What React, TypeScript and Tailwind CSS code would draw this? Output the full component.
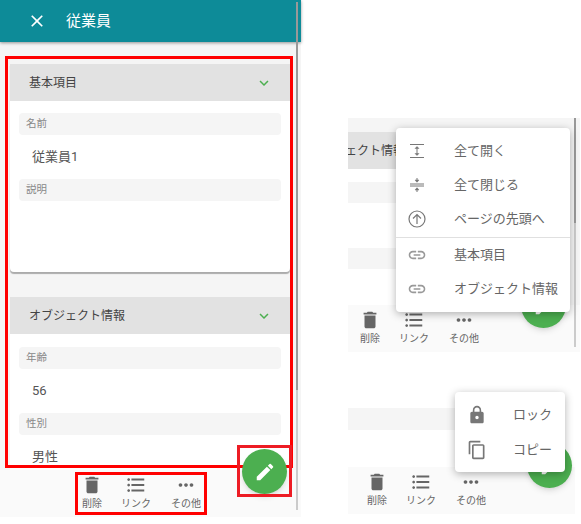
import { MdClose, MdContentCopy, MdDelete, MdEdit, MdExpandMore, MdFormatListBulleted, MdLink, MdLock, MdMoreHoriz } from "react-icons/md";

const font = "font-['Roboto','Noto_Sans_CJK_JP',sans-serif]";

const Toolbar = ({ left }: { left: string }) => (
  <div className={`flex h-[47px] shrink-0 bg-[#fafafa] text-[#666] ${left}`}>
    <div className="flex w-10 flex-col items-center pt-1">
      <MdDelete size={22} className="text-[#666]" />
      <span className="mt-[1px] text-[10px] leading-[14px]">削除</span>
    </div>
    <div className="flex w-12 flex-col items-center pt-1">
      <MdFormatListBulleted size={22} className="text-[#666]" />
      <span className="mt-[1px] text-[10px] leading-[14px] whitespace-nowrap">リンク</span>
    </div>
    <div className="flex w-[52px] flex-col items-center pt-1">
      <MdMoreHoriz size={22} className="text-[#666]" />
      <span className="mt-[1px] text-[10px] leading-[14px] whitespace-nowrap">その他</span>
    </div>
  </div>
);

const Label = ({ text }: { text: string }) => (
  <div className="flex h-[22px] items-center rounded-sm bg-[#f5f5f5] px-[7px] text-[10.5px] text-[#888]">{text}</div>
);

const Value = ({ text }: { text: string }) => (
  <div className="flex h-[44px] items-center pb-[1px] pl-[13px] text-[13px] text-[#555]">{text}</div>
);

const SectionHead = ({ title }: { title: string }) => (
  <div className="flex h-[37px] items-center justify-between bg-[#e2e2e2] pl-[19px] pr-[17px] text-[12px] text-[#444]">
    <span>{title}</span>
    <MdExpandMore size={18} className="text-[#4caf50]" />
  </div>
);

const Fab = ({ className }: { className: string }) => (
  <div className={`absolute flex size-[45px] items-center justify-center rounded-full bg-[#4caf50] text-white shadow-md ${className}`}>
    <MdEdit size={22} />
  </div>
);

const MenuItem = ({ icon, text, row }: { icon: React.ReactNode; text: string; row: string }) => (
  <div className={`flex items-center text-[13px] text-[#666] ${row}`}>
    <span className="flex w-[20px] justify-center text-[#777]">{icon}</span>
    <span className="whitespace-nowrap">{text}</span>
  </div>
);

const ExpandAll = () => (
  <svg width="18" height="18" viewBox="0 0 18 18" fill="none" stroke="currentColor">
    <path d="M2 2.5h14M2 15.5h14" strokeWidth="1.2" />
    <path d="M9 5v8" strokeWidth="1" />
    <path d="M7 6.5 9 4.5l2 2zM7 11.5l2 2 2-2z" fill="currentColor" strokeWidth="0.5" />
  </svg>
);

const CollapseAll = () => (
  <svg width="18" height="18" viewBox="0 0 18 18" fill="none" stroke="currentColor">
    <path d="M2 8h14M2 10h14" strokeWidth="1" />
    <path d="M9 2v4M9 12v4" strokeWidth="1" />
    <path d="M7 4 9 6.3 11 4zM7 14l2-2.3 2 2.3z" fill="currentColor" strokeWidth="0.5" />
  </svg>
);

const ToTop = () => (
  <svg width="20" height="20" viewBox="0 0 20 20" fill="none" stroke="currentColor" strokeWidth="1.2">
    <circle cx="10" cy="10" r="8" />
    <path d="M10 15V5.5M6 9.5l4-4 4 4" />
  </svg>
);

export default function App() {
  return (
    <div className={`flex h-[524px] w-[581px] overflow-hidden bg-white ${font}`}>
      {/* left screen */}
      <div className="relative flex h-[517px] w-[301px] shrink-0 flex-col bg-[#f5f5f5]">
        <div className="flex h-[42px] shrink-0 items-center bg-[#0d8b98] pl-[27px] text-white shadow-[0_1px_3px_rgba(0,0,0,0.4)]">
          <MdClose size={20} />
          <span className="ml-[19px] text-[15px]">従業員</span>
        </div>
        <div className="flex-1 overflow-hidden px-[10px] pt-[22px]">
          <div className="h-[208px] w-[280px] rounded-b-sm bg-white shadow-[0_2px_1px_rgba(0,0,0,0.3)]">
            <SectionHead title="基本項目" />
            <div className="px-[9px] pt-3">
              <Label text="名前" />
              <Value text="従業員1" />
              <Label text="説明" />
            </div>
          </div>
          <div className="mt-[25px] w-[280px] bg-white">
            <SectionHead title="オブジェクト情報" />
            <div className="px-[9px] pt-[13px]">
              <Label text="年齢" />
              <Value text="56" />
              <Label text="性別" />
              <Value text="男性" />
            </div>
          </div>
        </div>
        <Toolbar left="pl-[72px]" />
        <div className="absolute left-[296px] top-[2px] flex h-[508px] w-[2px] flex-col bg-[#cbcbcb]">
          <div className="h-[388px] bg-[#999]" />
        </div>
        {/* annotation boxes */}
        <div className="absolute left-[5px] top-[56px] h-[412px] w-[288px] border-[3px] border-[#ff0000]" />
        <div className="absolute left-[75px] top-[472px] h-[43px] w-[132px] border-[3px] border-[#ff0000]" />
        <Fab className="left-[242px] top-[449px]" />
        <div className="absolute left-[237px] top-[445px] h-[52px] w-[55px] border-[3px] border-[#ed1c24]" />
      </div>

      <div className="ml-[47px] flex flex-1 flex-col">
        {/* top crop: page menu */}
        <div className="relative mt-[118px] flex h-[234px] w-[232px] flex-col overflow-hidden bg-[#f5f5f5]">
          <div className="flex-1">
            <div className="h-[14px]" />
            <div className="flex h-[37px] w-[220px] items-center overflow-hidden whitespace-nowrap bg-[#e2e2e2] text-[12px] text-[#444]">
              <span className="-ml-[3px]">ェクト情報</span>
            </div>
            <div className="h-[136px] w-[220px] bg-white pt-[13px]">
              <div className="h-[21px] bg-[#f5f5f5]" />
              <div className="mt-[45px] h-[21px] bg-[#f5f5f5]" />
            </div>
          </div>
          <Toolbar left="pl-[2px]" />
          <Fab className="left-[173px] top-[165px]" />
          <div className="absolute left-[226px] top-0 flex h-[229px] w-[2px] flex-col bg-[#cbcbcb]">
            <div className="h-[105px] bg-[#999]" />
          </div>
          <div className="absolute left-[48px] top-[10px] h-[184px] w-[174px] rounded bg-white shadow-[0_2px_8px_rgba(0,0,0,0.3)]">
            <div className="pb-[1px] pt-[6px]">
              <MenuItem icon={<ExpandAll />} text="全て開く" row="h-[34px] gap-[27px] pl-[11px]" />
              <MenuItem icon={<CollapseAll />} text="全て閉じる" row="h-[34px] gap-[27px] pl-[11px]" />
              <MenuItem icon={<ToTop />} text="ページの先頭へ" row="h-[34px] gap-[27px] pl-[11px]" />
            </div>
            <div className="border-t border-[#e0e0e0]">
              <MenuItem icon={<MdLink size={20} className="text-[#999]" />} text="基本項目" row="h-[34px] gap-[27px] pl-[11px]" />
              <MenuItem icon={<MdLink size={20} className="text-[#999]" />} text="オブジェクト情報" row="h-[34px] gap-[27px] pl-[11px]" />
            </div>
          </div>
        </div>

        {/* bottom crop: more menu */}
        <div className="relative mt-[56px] flex h-[106px] w-[227px] flex-col bg-white">
          <div className="flex-1">
            <div className="h-[22px] w-[217px] bg-[#f5f5f5]" />
          </div>
          <Toolbar left="pl-[9px]" />
          <Fab className="left-[179px] top-[35px]" />
          <div className="absolute left-[107px] top-[-16px] h-[80px] w-[110px] rounded bg-white pt-[5px] shadow-[0_2px_8px_rgba(0,0,0,0.3)]">
            <MenuItem icon={<MdLock size={22} />} text="ロック" row="h-[35px] gap-[26px] pl-[12px]" />
            <MenuItem icon={<MdContentCopy size={20} />} text="コピー" row="h-[35px] gap-[26px] pl-[12px]" />
          </div>
        </div>
      </div>
    </div>
  );
}
